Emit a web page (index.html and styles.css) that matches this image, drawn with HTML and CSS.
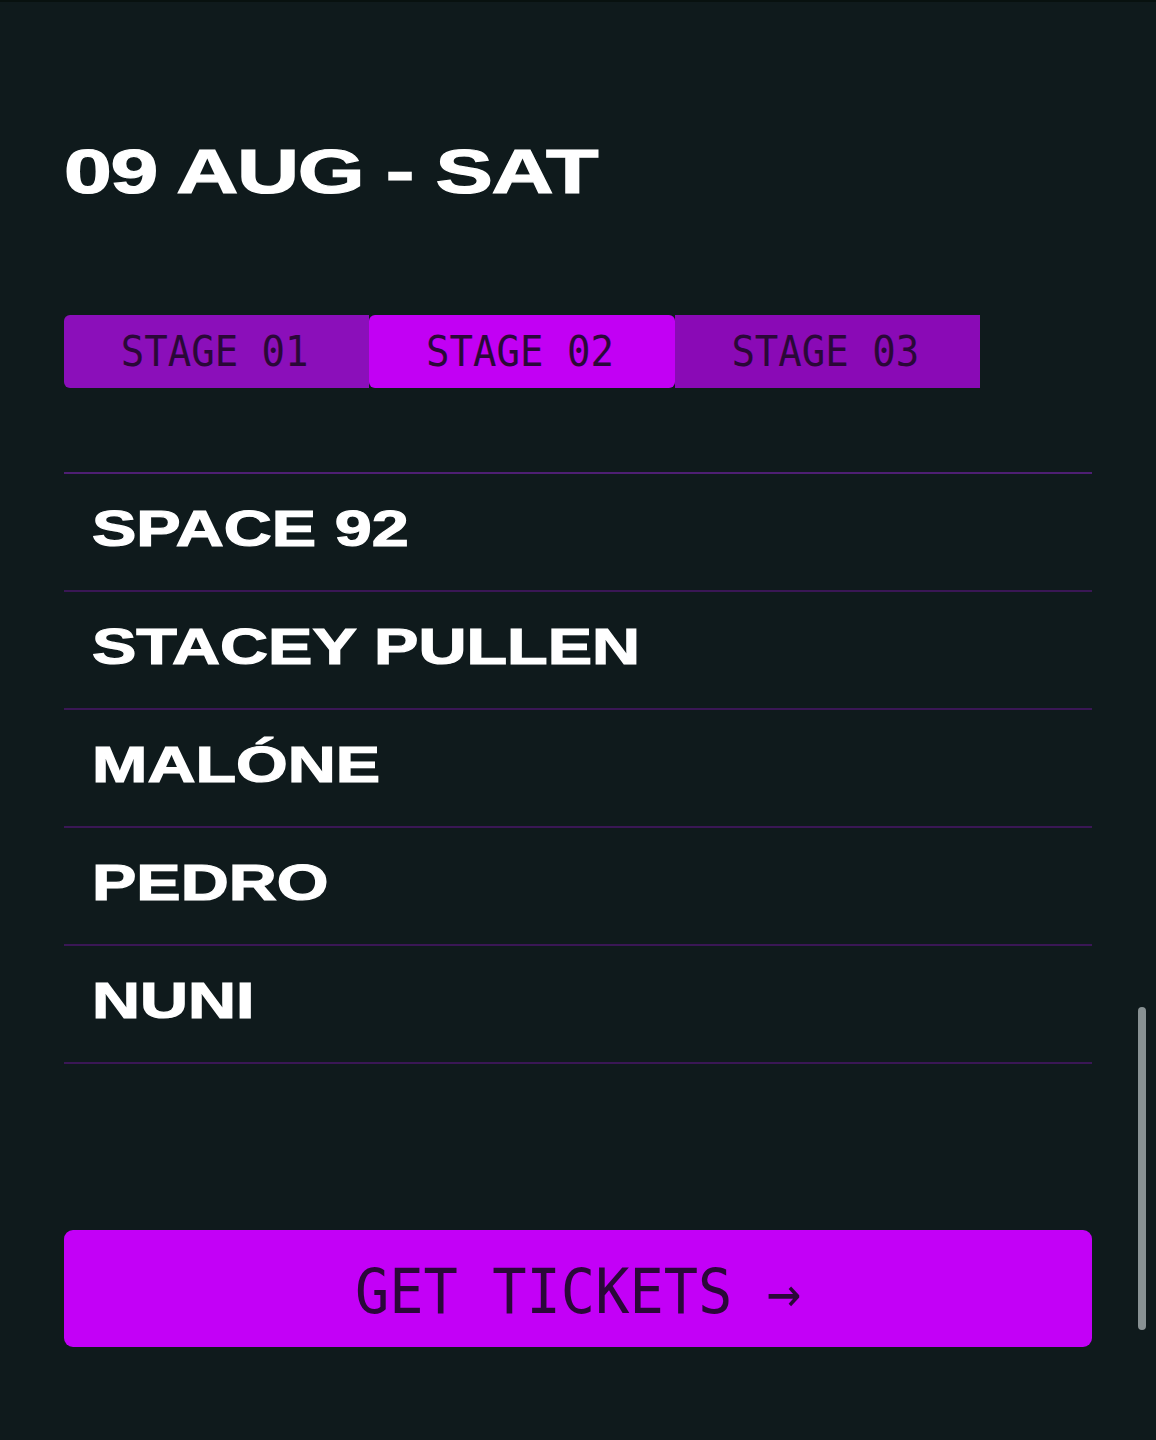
FILE: index.html
```html
<!DOCTYPE html>
<html lang="en">

<head>
    <meta charset="UTF-8">
    <meta name="viewport" content="width=device-width, initial-scale=1.0">
    <title>Line-up</title>
    <link rel="stylesheet" href="styles.css">
</head>

<body>

    <div class="page">
        <h1 class="dayTitle"><span class="wide">09 AUG - SAT</span></h1>

        <div class="stageTabs">
            <button class="stageTab first"><span class="monoText">STAGE 01</span></button>
            <button class="stageTab active"><span class="monoText">STAGE 02</span></button>
            <button class="stageTab last"><span class="monoText">STAGE 03</span></button>
        </div>

        <ul class="lineup">
            <li class="artist"><span class="wide">SPACE 92</span></li>
            <li class="artist"><span class="wide">STACEY PULLEN</span></li>
            <li class="artist"><span class="wide">MALÓNE</span></li>
            <li class="artist"><span class="wide">PEDRO</span></li>
            <li class="artist"><span class="wide">NUNI</span></li>
        </ul>

        <button class="ticketButton"><span class="monoText">GET TICKETS →</span></button>
    </div>

    <div class="scrollThumb"></div>

</body>

</html>
```

FILE: styles.css
```css
body,
html {
    margin: 0;
    padding: 0;
}

body {
    height: 1440px;
    background-color: #0f1a1c;
    border-top: 2px solid #08110f;
    box-sizing: border-box;
    font-family: "Liberation Sans", Arial, sans-serif;
    color: #fff;
    overflow: hidden;
    position: relative;
}

.page {
    padding: 138px 64px 0 64px;
    display: flex;
    flex-direction: column;
}

.wide {
    display: inline-block;
    transform: scaleX(1.33);
    transform-origin: left center;
    white-space: nowrap;
    -webkit-text-stroke: 1.2px #fff;
}

.dayTitle {
    margin: 0;
    font-size: 63px;
    line-height: 1;
    font-weight: 700;
}

.dayTitle .wide {
    letter-spacing: -1px;
    transform: scaleX(1.365);
}

.stageTabs {
    display: flex;
    margin-top: 112px;
    width: 916px;
}

.stageTab {
    flex: 1;
    height: 73px;
    border: none;
    padding: 0 4px 0 0;
    background-color: #8b0fba;
    color: #2a0838;
    font-family: "DejaVu Sans Mono", "Liberation Mono", monospace;
    font-size: 39px;
    display: flex;
    align-items: center;
    justify-content: center;
    cursor: pointer;
}

.stageTab.first {
    border-radius: 6px 0 0 6px;
}

.stageTab.active {
    background-color: #c200f4;
    border-radius: 6px;
}

.stageTab.last {
    background-color: #8a0ab6;
}

.monoText {
    display: inline-block;
    transform: scaleY(1.08);
}

.lineup {
    list-style: none;
    margin: 84px 0 0 0;
    padding: 0;
    border-top: 2px solid #4e1f73;
}

.artist {
    padding: 30px 28px 36px 28px;
    font-size: 50px;
    line-height: 1;
    font-weight: 700;
    border-bottom: 2px solid #3a1755;
}

.ticketButton {
    margin-top: 166px;
    height: 117px;
    border: none;
    border-radius: 9px;
    background-color: #c300f7;
    color: #2a0838;
    font-family: "DejaVu Sans Mono", "Liberation Mono", monospace;
    font-size: 57px;
    display: flex;
    align-items: center;
    justify-content: center;
    padding: 4px 0 0 0;
    cursor: pointer;
}

.scrollThumb {
    position: absolute;
    top: 1005px;
    right: 10px;
    width: 8px;
    height: 323px;
    border-radius: 4px;
    background-color: #889193;
}
```
